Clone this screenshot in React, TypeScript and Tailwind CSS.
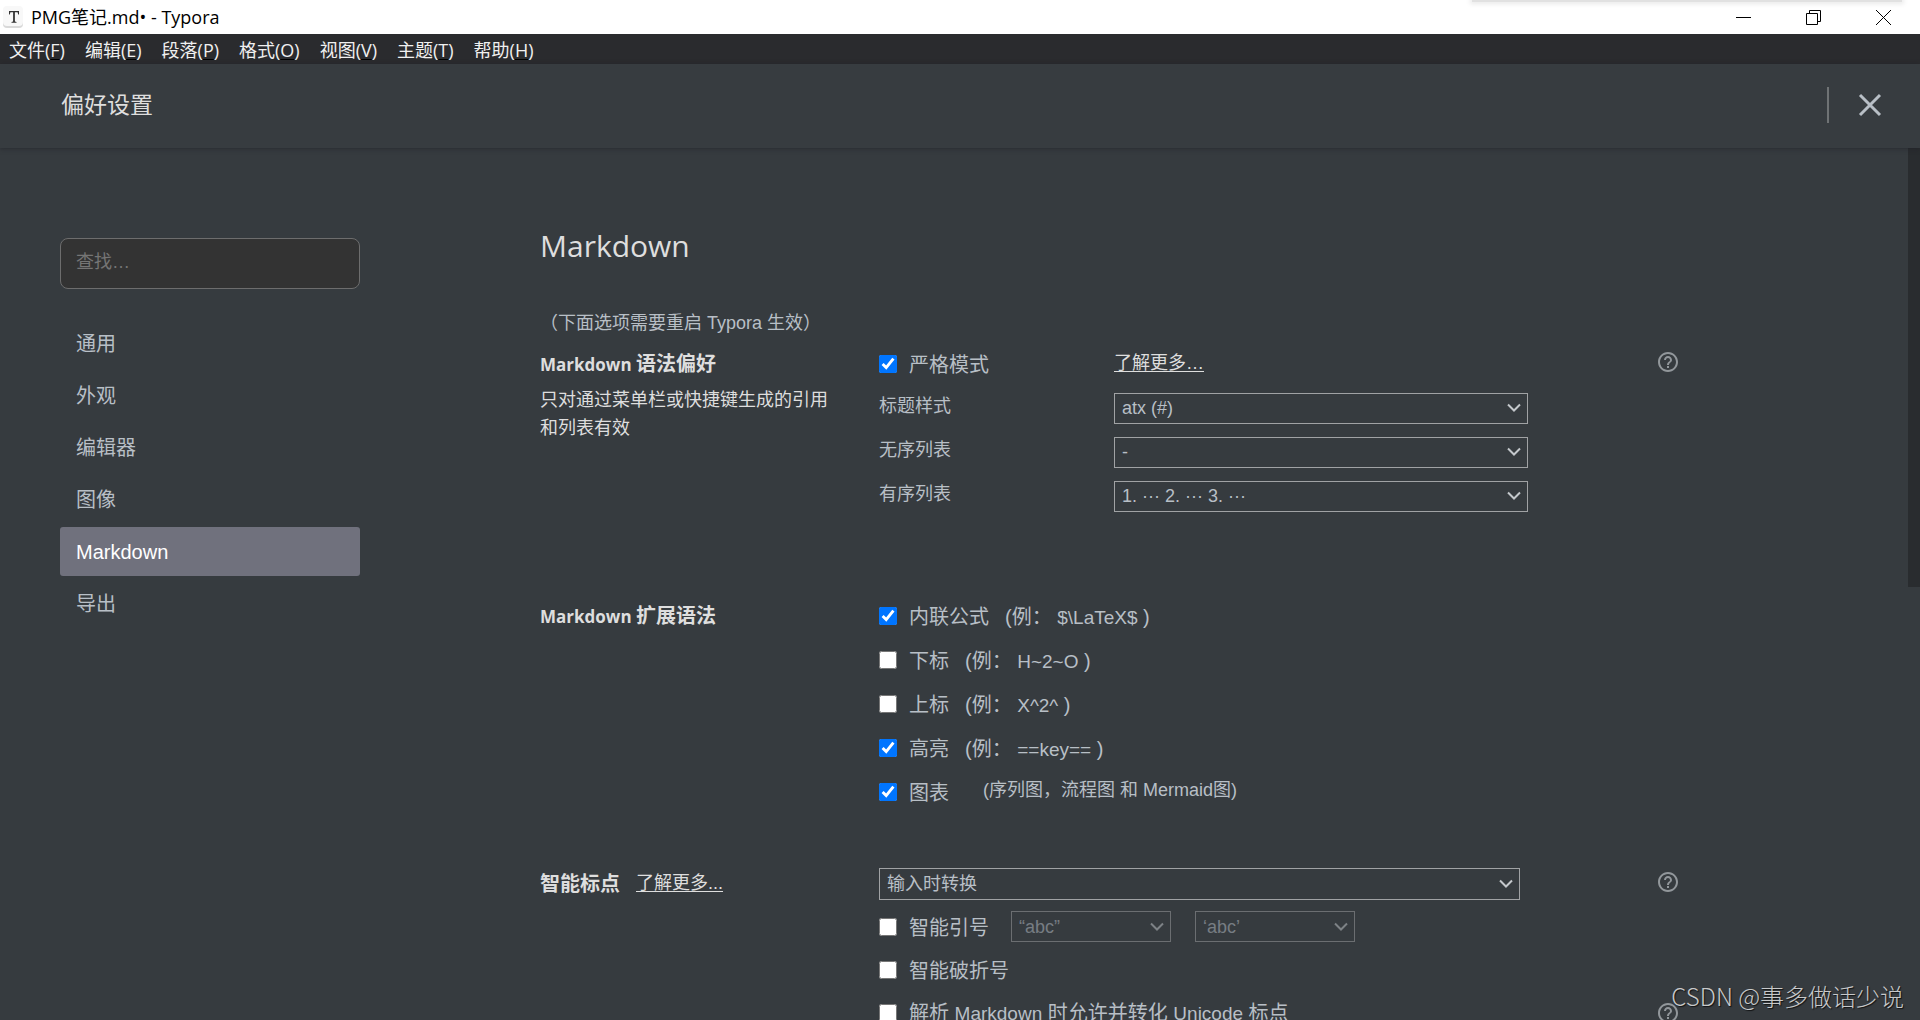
import type { ReactNode } from "react";
import clsx from "clsx";
import { MdHelpOutline } from "react-icons/md";

const menus = [
  { label: "文件", key: "F" },
  { label: "编辑", key: "E" },
  { label: "段落", key: "P" },
  { label: "格式", key: "O" },
  { label: "视图", key: "V" },
  { label: "主题", key: "T" },
  { label: "帮助", key: "H" },
];

const tabs = ["通用", "外观", "编辑器", "图像", "Markdown", "导出"];

const styleOptions = [
  { id: "heading-style", label: "标题样式", value: "atx (#)" },
  { id: "unordered-list", label: "无序列表", value: "-" },
  { id: "ordered-list", label: "有序列表", value: "1. ··· 2. ··· 3. ···" },
];

const extensions = [
  { id: "inline-math", label: "内联公式", sample: "$\\LaTeX$", on: true },
  { id: "subscript", label: "下标", sample: "H~2~O", on: false },
  { id: "superscript", label: "上标", sample: "X^2^", on: false },
  { id: "highlight", label: "高亮", sample: "==key==", on: true },
];

export default function App() {
  return (
    <div className="flex h-screen flex-col overflow-hidden bg-[#363b3f] font-['Liberation_Sans','Noto_Sans_CJK_SC',sans-serif] text-[#b8bfc6]">
      <TitleBar />
      <MenuBar />
      <header className="z-10 flex h-[84px] shrink-0 items-center justify-between bg-[#373c40] pr-[38px] pb-0.5 pl-[61px] shadow-[0_1px_4px_rgba(30,30,36,0.5)]">
        <h1 className="text-[23px] text-[#dedede]">偏好设置</h1>
        <div className="flex items-center gap-[29px]">
          <span className="h-9 w-0.5 bg-[#6f7375]" />
          <button aria-label="关闭偏好设置">
            <svg width="24" height="24" viewBox="0 0 24 24" fill="none" stroke="#b8bfc6" strokeWidth="3">
              <path d="M2 2l20 20M22 2L2 22" />
            </svg>
          </button>
        </div>
      </header>

      <div className="flex min-h-0 flex-1">
        <Sidebar />
        <main className="min-w-0 flex-1 pt-[76px] pr-[230px] pl-[180px]">
          <h2 className="font-['Open_Sans','Noto_Sans_CJK_SC',sans-serif] text-[30px] leading-[44px] text-[#dedede]">
            Markdown
          </h2>
          <p className="mt-[41px] text-lg leading-7">（下面选项需要重启 Typora 生效）</p>

          {/* Syntax preference */}
          <Section
            prefix="Markdown"
            title="语法偏好"
            note="只对通过菜单栏或快捷键生成的引用和列表有效"
            help
            className="mt-[5px]"
          >
            <div className="grid h-11 grid-cols-[235px_1fr] items-center">
              <Check id="strict-mode" label="严格模式" on />
              <MoreLink>了解更多…</MoreLink>
            </div>
            {styleOptions.map((o) => (
              <div key={o.id} className="grid h-11 grid-cols-[235px_1fr] items-center">
                <label htmlFor={o.id} className="pb-1 text-lg leading-6">{o.label}</label>
                <Select id={o.id} value={o.value} className="h-[31px] w-[414px]" />
              </div>
            ))}
          </Section>

          {/* Syntax extensions */}
          <Section prefix="Markdown" title="扩展语法" className="mt-[76px]">
            {extensions.map((e) => (
              <div key={e.id} className="flex h-11 items-center">
                <Check id={e.id} label={e.label} on={e.on} />
                <span className="ml-4 pt-0.5 text-xl">
                  (例：&nbsp;<span className="text-[19px]">{e.sample}</span> )
                </span>
              </div>
            ))}
            <div className="flex h-11 items-center">
              <Check id="diagrams" label="图表" on />
              <span className="ml-[34px] pb-1 text-lg leading-6">(序列图，流程图 和 Mermaid图)</span>
            </div>
          </Section>

          {/* Smart punctuation */}
          <Section title="智能标点" link help className="mt-12">
            <div className="flex h-[43px] items-center">
              <Select id="smart-punctuation" label="智能标点" value="输入时转换" className="h-8 w-[641px]" />
            </div>
            <div className="flex h-[43px] items-center">
              <Check id="smart-quotes" label="智能引号" />
              <Select id="double-quotes" label="双引号" value="“abc”" disabled className="ml-[22px] h-[31px] w-40" />
              <Select id="single-quotes" label="单引号" value="‘abc’" disabled className="ml-6 h-[31px] w-40" />
            </div>
            <div className="flex h-[43px] items-center">
              <Check id="smart-dashes" label="智能破折号" />
            </div>
            <div className="grid h-[43px] grid-cols-[1fr_0] items-center">
              <Check
                id="unicode-punctuation"
                label={
                  <>
                    解析 <span className="text-[19px]">Markdown</span> 时允许并转化{" "}
                    <span className="text-[19px]">Unicode</span> 标点
                  </>
                }
              />
              <HelpButton />
            </div>
          </Section>
        </main>
        <div className="w-3 shrink-0">
          <div className="h-[439px] bg-[#292c2f]" />
        </div>
      </div>

      <p className="absolute right-4 bottom-2 z-20 font-['Noto_Sans_CJK_SC',sans-serif] text-2xl font-light leading-8 text-[#c8c9ca] [text-shadow:1px_1px_1px_rgba(0,0,0,0.7)]">
        CSDN @事多做话少说
      </p>
    </div>
  );
}

function TitleBar() {
  return (
    <div className="relative flex h-[34px] shrink-0 items-center justify-between bg-white pr-0.5 pl-0.5 text-black">
      <div className="absolute top-0 right-[18px] h-0.5 w-[430px] bg-[#e1e1e1] shadow-[0_0_5px_2px_#e9e9e9]" />
      <div className="flex items-center gap-[7px]">
        <svg width="22" height="24" viewBox="0 0 22 24">
          <rect x="1" y="3" width="20" height="20" rx="4" fill="#d9d9d9" />
          <rect x="1" y="1" width="20" height="20" rx="4" fill="#f8f8f8" />
          <path d="M7 6h10v3.500h-.8l-.6-2.200h-2.700v9.200l1.600.5v.8H9.500v-.8l1.600-.5V7.300H8.400l-.6 2.200H7z" fill="#333" />
        </svg>
        <span className="font-['Open_Sans','Noto_Sans_CJK_SC',sans-serif] text-lg leading-6">
          PMG笔记.md• - Typora
        </span>
      </div>
      <div className="flex">
        <WindowButton label="最小化" d="M0 7.500h15" />
        <WindowButton label="还原" d="M.5 3.500h11v11H.5zM3.500 3.500v-3h11v11h-3" />
        <WindowButton label="关闭" d="M0 0l15 15M15 0L0 15" />
      </div>
    </div>
  );
}

function WindowButton({ label, d }: { label: string; d: string }) {
  return (
    <button aria-label={label} className="flex h-[34px] w-[70px] items-center justify-center">
      <svg width="15" height="15" viewBox="0 0 15 15" fill="none" stroke="#000">
        <path d={d} />
      </svg>
    </button>
  );
}

function MenuBar() {
  return (
    <nav className="flex h-[30px] shrink-0 items-center gap-5 bg-[#2a2b2e] pt-0.5 pl-[9px] font-['Open_Sans','Noto_Sans_CJK_SC',sans-serif] text-lg leading-6 text-[#f0f0f0]">
      {menus.map((m) => (
        <button key={m.key}>
          {m.label}(<span className="underline decoration-black underline-offset-2">{m.key}</span>)
        </button>
      ))}
    </nav>
  );
}

function Sidebar() {
  return (
    <aside className="w-[360px] shrink-0 pt-[90px] pl-[60px]">
      <input
        type="search"
        aria-label="查找"
        placeholder="查找…"
        className="h-[51px] w-full rounded-lg border border-[#6d6d6d] bg-[#333] px-[15px] pb-0.5 text-lg placeholder:text-[#757575]"
      />
      <ul className="mt-[30px] space-y-[3px]">
        {tabs.map((t) => (
          <li key={t}>
            <a
              href="#"
              className={clsx(
                "flex h-[49px] items-center rounded-[3px] px-4 text-xl",
                t === "Markdown" && "bg-[#70717d] text-white"
              )}
            >
              {t}
            </a>
          </li>
        ))}
      </ul>
    </aside>
  );
}

type SectionProps = {
  title: string;
  prefix?: string;
  note?: string;
  link?: boolean;
  help?: boolean;
  className?: string;
  children: ReactNode;
};

function Section({ title, prefix, note, link, help, className, children }: SectionProps) {
  return (
    <section className={clsx("grid grid-cols-[339px_1fr_20px]", className)}>
      <div className="pr-12">
        <div className="flex h-11 items-center gap-4">
          <h3 className="font-['Open_Sans','Noto_Sans_CJK_SC',sans-serif] text-xl leading-7 font-bold text-[#dedede]">
            {prefix && <span className="text-[17px]">{prefix} </span>}
            {title}
          </h3>
          {link && <MoreLink>了解更多...</MoreLink>}
        </div>
        {note && <p className="text-lg leading-7 text-[#dedede]">{note}</p>}
      </div>
      <div>{children}</div>
      {help && (
        <div className="flex h-10 items-center">
          <HelpButton />
        </div>
      )}
    </section>
  );
}

function MoreLink({ children }: { children: ReactNode }) {
  return (
    <a href="#" className="pb-0.5 text-lg leading-6 text-[#dedede] underline underline-offset-2">
      {children}
    </a>
  );
}

function HelpButton() {
  return (
    <button aria-label="帮助" className="-ml-0.5 shrink-0">
      <MdHelpOutline className="size-6 text-[#92979b]" />
    </button>
  );
}

function Check({ id, label, on }: { id: string; label: ReactNode; on?: boolean }) {
  return (
    <div className="flex items-center gap-3">
      <input id={id} type="checkbox" defaultChecked={on} className="size-[18px] shrink-0" />
      <label htmlFor={id} className="pt-0.5 text-xl whitespace-nowrap">{label}</label>
    </div>
  );
}

type SelectProps = {
  id: string;
  value: string;
  label?: string;
  disabled?: boolean;
  className?: string;
};

function Select({ id, value, label, disabled, className }: SelectProps) {
  return (
    <div className={clsx("relative", className, disabled && "opacity-50")}>
      <select
        id={id}
        aria-label={label}
        disabled={disabled}
        className="size-full appearance-none border border-[#a0a2a4] bg-transparent pr-8 pl-[7px] text-lg leading-6"
      >
        <option>{value}</option>
      </select>
      <svg
        className="pointer-events-none absolute inset-y-0 right-[7px] my-auto"
        width="14"
        height="10"
        viewBox="0 0 14 10"
        fill="none"
        stroke="#c4c8cc"
        strokeWidth="2"
      >
        <path d="M1 1.500l6 6 6-6" />
      </svg>
    </div>
  );
}
